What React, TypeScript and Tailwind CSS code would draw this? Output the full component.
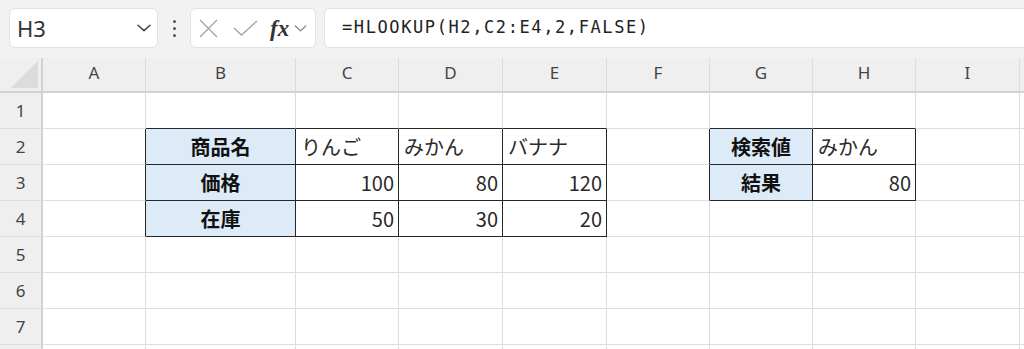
const COLS = ["A", "B", "C", "D", "E", "F", "G", "H", "I", "J"];
const ROWS = [1, 2, 3, 4, 5, 6, 7, 8];

type Cell = { text: string; kind: "label" | "text" | "num" };

const cells: Record<string, Cell> = {
  B2: { text: "商品名", kind: "label" },
  C2: { text: "りんご", kind: "text" },
  D2: { text: "みかん", kind: "text" },
  E2: { text: "バナナ", kind: "text" },
  B3: { text: "価格", kind: "label" },
  C3: { text: "100", kind: "num" },
  D3: { text: "80", kind: "num" },
  E3: { text: "120", kind: "num" },
  B4: { text: "在庫", kind: "label" },
  C4: { text: "50", kind: "num" },
  D4: { text: "30", kind: "num" },
  E4: { text: "20", kind: "num" },
  G2: { text: "検索値", kind: "label" },
  H2: { text: "みかん", kind: "text" },
  G3: { text: "結果", kind: "label" },
  H3: { text: "80", kind: "num" },
};

// black edges of the two bordered ranges (B2:E4 and G2:H3)
function darkRight(col: string, row: number) {
  if (row >= 2 && row <= 4 && "ABCDE".includes(col)) return true;
  if (row >= 2 && row <= 3 && "FGH".includes(col)) return true;
  return false;
}

function darkBottom(col: string, row: number) {
  if (row >= 1 && row <= 4 && "BCDE".includes(col)) return true;
  if (row >= 1 && row <= 3 && "GH".includes(col)) return true;
  return false;
}

function GridCell({ col, row }: { col: string; row: number }) {
  const cell = cells[`${col}${row}`];
  const r = darkRight(col, row) ? "border-r-[#262626]" : "border-r-[#dedede]";
  const b = darkBottom(col, row) ? "border-b-[#262626]" : "border-b-[#dedede]";
  const bg = cell?.kind === "label" ? "bg-[#dcebf7]" : "bg-white";
  const align =
    cell?.kind === "label"
      ? "justify-center font-bold text-[#111]"
      : cell?.kind === "num"
        ? "justify-end pr-[4px] text-[#2a2a2a]"
        : "justify-start pl-[5px] text-[#2a2a2a]";
  return (
    <div
      className={`flex h-[36px] items-center overflow-hidden whitespace-nowrap border-r border-b text-[20px] ${r} ${b} ${bg} ${align}`}
    >
      {cell?.text}
    </div>
  );
}

function Chevron({ className }: { className: string }) {
  return (
    <svg viewBox="0 0 14 8" className={className} fill="none">
      <path d="M1 1.2 7 6.6 13 1.2" stroke="currentColor" strokeWidth="1.5" strokeLinecap="round" strokeLinejoin="round" />
    </svg>
  );
}

function FormulaBar() {
  return (
    <div className="flex h-[58px] items-start overflow-hidden pt-[8px]">
      {/* name box */}
      <div className="ml-[9px] flex h-[40px] w-[149px] shrink-0 items-center justify-between rounded-[6px] border border-[#e2e2e2] bg-white pl-[7px] pr-[6px]">
        <span className="text-[22px] leading-none text-[#333]" style={{ fontFamily: '"Noto Sans", sans-serif' }}>
          H3
        </span>
        <Chevron className="h-[8px] w-[14px] text-[#444]" />
      </div>

      <div className="flex h-[40px] w-[32px] shrink-0 flex-col items-center justify-center gap-[4px]">
        <span className="h-[3px] w-[3px] rounded-full bg-[#555]" />
        <span className="h-[3px] w-[3px] rounded-full bg-[#555]" />
        <span className="h-[3px] w-[3px] rounded-full bg-[#555]" />
      </div>

      {/* cancel / enter / insert function */}
      <div className="flex h-[40px] w-[126px] shrink-0 items-center rounded-[6px] border border-[#e2e2e2] bg-white pl-[8px]">
        <svg viewBox="0 0 19 19" className="h-[19px] w-[19px]" fill="none">
          <path d="M1 1 18 18M18 1 1 18" stroke="#a3a3a3" strokeWidth="1.3" />
        </svg>
        <svg viewBox="0 0 25 16" className="ml-[15px] h-[16px] w-[25px]" fill="none">
          <path d="M1 8 8.5 15 24 1" stroke="#a3a3a3" strokeWidth="1.3" />
        </svg>
        <span
          className="ml-[12px] text-[23px] font-bold italic leading-none text-[#333]"
          style={{ fontFamily: '"Liberation Serif", serif' }}
        >
          fx
        </span>
        <Chevron className="ml-[5px] h-[7px] w-[13px] text-[#8a8a8a]" />
      </div>

      {/* formula input */}
      <div className="ml-[8px] flex h-[40px] w-[720px] shrink-0 items-center rounded-[6px] border border-[#e2e2e2] bg-white pl-[17px]">
        <span
          className="text-[17px] tracking-[1.6px] text-[#222]"
          style={{ fontFamily: '"DejaVu Sans Mono", monospace' }}
        >
          =HLOOKUP(H2,C2:E4,2,FALSE)
        </span>
      </div>
    </div>
  );
}

export default function App() {
  return (
    <div className="h-[349px] w-[1024px] overflow-hidden bg-[#f2f2f2]">
      <FormulaBar />

      <div
        className="grid grid-cols-[43px_103px_150px_103px_104px_104px_103px_103px_103px_104px_1fr]"
        style={{ fontFamily: '"Noto Sans CJK JP", "Noto Sans", sans-serif' }}
      >
        {/* column headers */}
        <div className="flex h-[35px] items-end justify-end border-r-2 border-b-2 border-r-[#d2d2d2] border-b-[#d2d2d2] bg-[#efefef] pr-[3px] pb-[3px]">
          <svg viewBox="0 0 27 27" className="h-[27px] w-[27px]">
            <polygon points="0,27 27,27 27,0" fill="#dcdcdc" />
          </svg>
        </div>
        {COLS.map((c) => (
          <div
            key={c}
            className="flex h-[35px] items-center justify-center border-r border-b-2 border-r-[#dcdcdc] border-b-[#d2d2d2] bg-[#efefef] pb-[6px] pt-[2px] text-[17px] text-[#444]"
            style={{ fontFamily: '"Noto Sans", sans-serif' }}
          >
            {c === "J" ? "" : c}
          </div>
        ))}

        {ROWS.map((row) => (
          <div key={row} className="contents">
            <div
              className="flex h-[36px] items-center justify-center border-r-2 border-b border-r-[#d2d2d2] border-b-[#dedede] bg-[#efefef] text-[17px] text-[#444]"
              style={{ fontFamily: '"Noto Sans", sans-serif' }}
            >
              {/* row 8 sits below the window edge, only its top shows */}
              {row < 8 ? row : ""}
            </div>
            {COLS.map((col) => (
              <GridCell key={col} col={col} row={row} />
            ))}
          </div>
        ))}
      </div>
    </div>
  );
}
